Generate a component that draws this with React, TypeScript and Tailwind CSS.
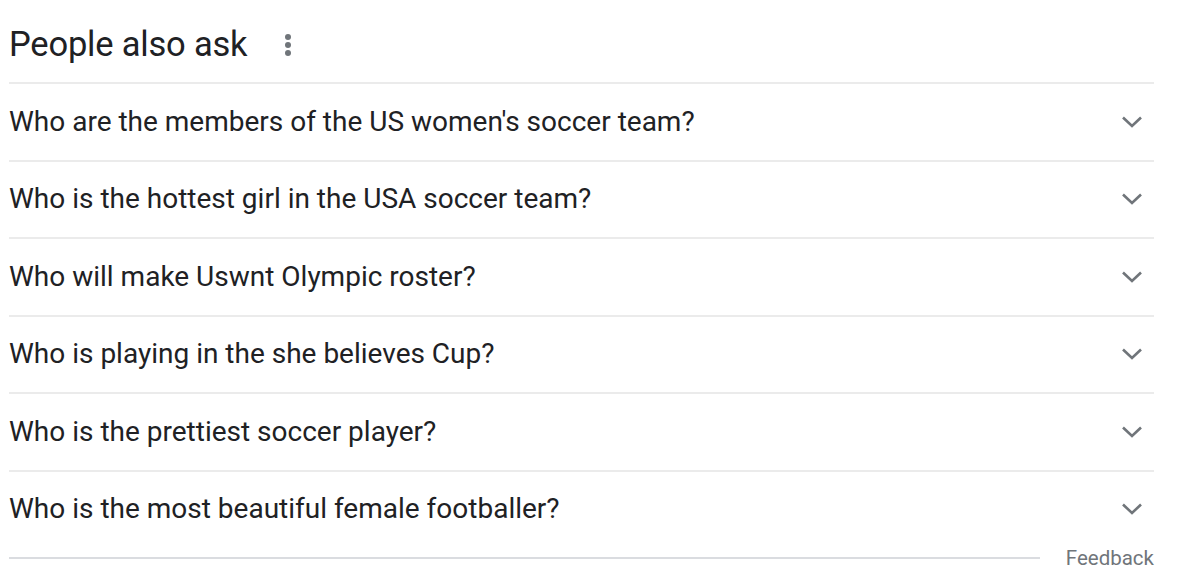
import React from "react";

const questions = [
  "Who are the members of the US women's soccer team?",
  "Who is the hottest girl in the USA soccer team?",
  "Who will make Uswnt Olympic roster?",
  "Who is playing in the she believes Cup?",
  "Who is the prettiest soccer player?",
  "Who is the most beautiful female footballer?",
];

function Chevron() {
  return (
    <svg width="22" height="14" viewBox="0 0 22 14" fill="none">
      <path d="M2 2.5 L11 11 L20 2.5" stroke="#70757a" strokeWidth="2.6" strokeLinecap="butt" strokeLinejoin="miter" />
    </svg>
  );
}

export default function App() {
  return (
    <div className="w-[1200px] h-[582px] bg-white overflow-hidden font-['Roboto',sans-serif]">
      <div className="ml-[9px] w-[1145px]">
        {/* Heading */}
        <div className="h-[82px] flex items-center gap-[38px] pt-[6px]">
          <h2 className="text-[34.5px] leading-none text-[#202124] tracking-[-0.2px]">People also ask</h2>
          <div className="flex flex-col gap-[2px] pt-[2px]">
            <span className="w-[6px] h-[6px] rounded-full bg-[#70757a]" />
            <span className="w-[6px] h-[6px] rounded-full bg-[#70757a]" />
            <span className="w-[6px] h-[6px] rounded-full bg-[#70757a]" />
          </div>
        </div>

        {/* Questions */}
        {questions.map((q) => (
          <div
            key={q}
            className="h-[77.5px] flex items-center justify-between border-t-2 border-[#ebebeb]"
          >
            <span className="text-[28px] text-[#202124] leading-none">{q}</span>
            <span className="mr-[11px] flex items-center">
              <Chevron />
            </span>
          </div>
        ))}

        {/* Feedback */}
        <div className="mt-[1px] flex items-center gap-[26px]">
          <div className="flex-1 h-[2px] bg-[#dadce0]" />
          <span className="text-[20.5px] text-[#70757a] leading-none">Feedback</span>
        </div>
      </div>
    </div>
  );
}
